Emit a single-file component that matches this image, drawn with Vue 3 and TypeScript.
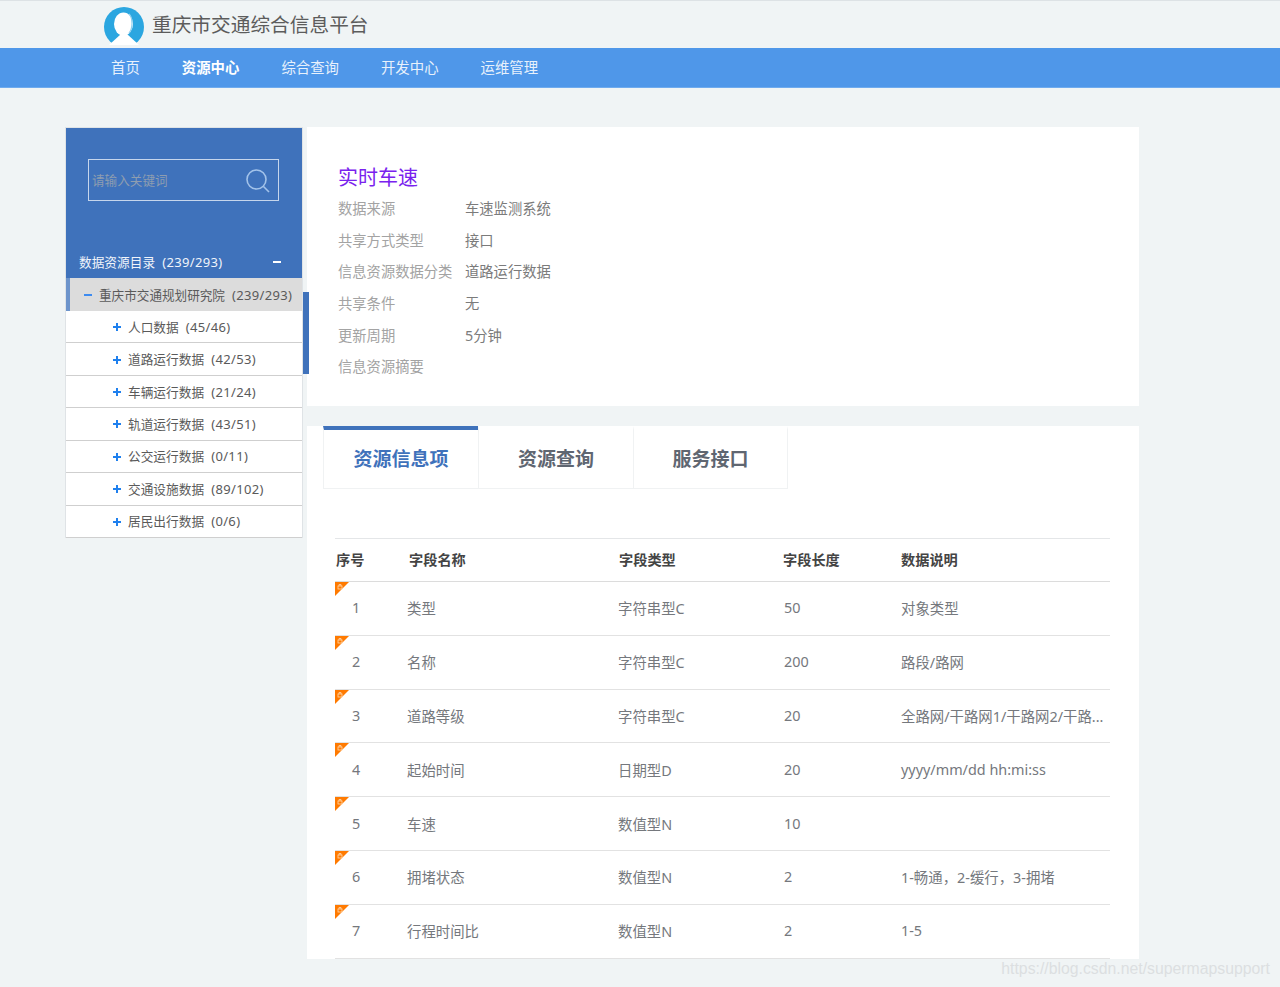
<script setup lang="ts">
const navItems = ['首页', '资源中心', '综合查询', '开发中心', '运维管理']
const children = [
  ['人口数据', '(45/46)'],
  ['道路运行数据', '(42/53)'],
  ['车辆运行数据', '(21/24)'],
  ['轨道运行数据', '(43/51)'],
  ['公交运行数据', '(0/11)'],
  ['交通设施数据', '(89/102)'],
  ['居民出行数据', '(0/6)'],
]
const meta = [
  ['数据来源', '车速监测系统'],
  ['共享方式类型', '接口'],
  ['信息资源数据分类', '道路运行数据'],
  ['共享条件', '无'],
  ['更新周期', '5分钟'],
  ['信息资源摘要', ''],
]
const tabs = ['资源信息项', '资源查询', '服务接口']
const heads = ['序号', '字段名称', '字段类型', '字段长度', '数据说明']
const rows = [
  ['1', '类型', '字符串型C', '50', '对象类型'],
  ['2', '名称', '字符串型C', '200', '路段/路网'],
  ['3', '道路等级', '字符串型C', '20', '全路网/干路网1/干路网2/干路...'],
  ['4', '起始时间', '日期型D', '20', 'yyyy/mm/dd hh:mi:ss'],
  ['5', '车速', '数值型N', '10', ''],
  ['6', '拥堵状态', '数值型N', '2', '1-畅通，2-缓行，3-拥堵'],
  ['7', '行程时间比', '数值型N', '2', '1-5'],
]
</script>

<template>
  <div class="page">
    <header class="top">
      <svg class="logo" viewBox="0 0 40 38" width="40" height="38">
        <defs>
          <clipPath id="logo-clip"><rect x="0" y="0" width="40" height="38" /></clipPath>
        </defs>
        <g clip-path="url(#logo-clip)">
          <circle cx="20" cy="20" r="20" fill="#2ba6e0" />
          <path d="M5 38 L17 27 L23 27 L35 38 Z" fill="#fff" />
          <ellipse cx="19.5" cy="17" rx="9.5" ry="11.5" fill="#fff" />
          <path d="M25 7 C29 11 29 21 25 26" fill="none" stroke="#8fcfee" stroke-width="1.2" />
        </g>
      </svg>
      <span class="brand">重庆市交通综合信息平台</span>
    </header>
    <nav class="nav">
      <a v-for="(n, i) in navItems" :key="n" class="nav-item" :class="{ on: i === 1 }">{{ n }}</a>
    </nav>

    <div class="body">
      <aside class="side">
        <div class="side-head">
          <div class="search">
            <span class="ph">请输入关键词</span>
            <svg viewBox="0 0 26 26" width="26" height="26" class="mag">
              <circle cx="11.5" cy="11.5" r="9.5" fill="none" stroke="#a3c3ea" stroke-width="1.6" />
              <path d="M18.5 18.5 L24 24" stroke="#a3c3ea" stroke-width="1.6" fill="none" />
            </svg>
          </div>
          <div class="cat">
            <span>数据资源目录<span class="num">(239/293)</span></span>
            <i class="cat-minus"></i>
          </div>
        </div>
        <div class="org">
          <i class="org-minus"></i>
          <span>重庆市交通规划研究院<span class="num">(239/293)</span></span>
        </div>
        <div v-for="c in children" :key="c[0]" class="child">
          <i class="plus"></i>
          <span class="child-text">{{ c[0] }}<span class="num">{{ c[1] }}</span></span>
        </div>
      </aside>
      <div class="strip-wrap"><i class="strip"></i></div>

      <main class="main">
        <section class="info">
          <h1 class="title">实时车速</h1>
          <div v-for="m in meta" :key="m[0]" class="meta">
            <span class="k">{{ m[0] }}</span>
            <span class="v">{{ m[1] }}</span>
          </div>
        </section>
        <section class="panel">
          <div class="tabs">
            <div v-for="(t, i) in tabs" :key="t" class="tab" :class="{ on: i === 0 }">{{ t }}</div>
          </div>
          <div class="table">
            <div class="row head">
              <span v-for="h in heads" :key="h" class="cell">{{ h }}</span>
            </div>
            <div v-for="r in rows" :key="r[0]" class="row item">
              <svg class="flag" viewBox="0 0 14 14" width="14" height="14">
                <path d="M0 0 H14 L0 14 Z" fill="#ff7a00" />
                <rect x="3" y="4" width="4" height="3" fill="none" stroke="#ffd9b0" stroke-width="0.8" />
                <path d="M4 4 V2.5 H6 V4" fill="none" stroke="#ffd9b0" stroke-width="0.8" />
              </svg>
              <span v-for="(c, i) in r" :key="i" class="cell">{{ c }}</span>
            </div>
          </div>
        </section>
      </main>
    </div>
    <div class="mark">https://blog.csdn.net/supermapsupport</div>
  </div>
</template>

<style>
html, body { margin: 0; background: #f0f4f5; }
</style>

<style scoped>
.page {
  position: relative;
  height: 987px;
  overflow: hidden;
  background: #f0f4f5;
  font-family: "Noto Sans", "Noto Sans CJK SC", sans-serif;
  color: #555;
}
.top {
  height: 47px;
  border-top: 1px solid #dde2e5;
  display: flex;
  align-items: flex-end;
  padding-left: 104px;
  box-sizing: content-box;
}
.logo { display: block; margin-bottom: 3px; }
.brand {
  margin-left: 8px;
  font-size: 19.7px;
  line-height: 47px;
  color: #5c5c5c;
  align-self: center;
}
.nav {
  height: 39px;
  border-bottom: 1px solid #6fabee;
  background: #4f97e9;
  display: flex;
  padding-left: 111px;
  gap: 42px;
  align-items: center;
}
.nav-item { font-size: 14.4px; color: #e8f1fc; line-height: 39px; }
.nav-item.on { color: #fff; font-weight: 700; }

.body {
  display: flex;
  align-items: flex-start;
  padding: 39px 0 0 65px;
}
.side {
  width: 236px;
  border: 1px solid #dfe3e6;
  border-bottom: none;
  background: #fff;
  flex: none;
}
.side-head {
  background: #3f72bb;
  height: 150px;
  box-sizing: border-box;
  padding: 31px 0 0 22px;
  display: flex;
  flex-direction: column;
}
.search {
  width: 191px;
  height: 42px;
  box-sizing: border-box;
  border: 1px solid #c6d6ec;
  display: flex;
  align-items: center;
  justify-content: space-between;
  padding: 0 7px 0 3px;
}
.ph { font-size: 12.6px; color: #8e9db0; margin-bottom: 1px; }
.mag { display: block; margin-top: 2px; }
.cat {
  margin: 51px 0 0 -9px;
  display: flex;
  justify-content: space-between;
  align-items: center;
  padding-right: 21px;
  font-size: 12.7px;
  line-height: 20px;
  color: #f0f4fa;
  white-space: nowrap;
}
.num { margin-left: 7px; font-size: 13px; letter-spacing: 0.35px; }
.cat-minus { width: 8px; height: 2px; background: #fff; margin-top: -1px; }
.org {
  height: 33px;
  background: #dcdcdc;
  border-left: 4px solid #6d94cb;
  box-sizing: border-box;
  display: flex;
  align-items: center;
  padding-left: 14px;
  font-size: 12.6px;
  color: #5a5a5a;
  white-space: nowrap;
}
.org-minus { width: 8px; height: 2px; background: #3d8bf0; margin-right: 7px; margin-top: 1px; }
.child {
  height: 32.43px;
  box-sizing: border-box;
  border-bottom: 1px solid #cfcfcf;
  display: flex;
  align-items: center;
  padding-left: 47px;
  font-size: 12.7px;
  color: #5a5a5a;
  white-space: nowrap;
  background: #fff;
}
.child-text { margin-bottom: 1px; }
.plus {
  width: 8px;
  height: 8px;
  margin-right: 7px;
  margin-top: 1px;
  background:
    linear-gradient(#1f80ee, #1f80ee) center / 8px 2px no-repeat,
    linear-gradient(#1f80ee, #1f80ee) center / 2px 8px no-repeat;
  flex: none;
}
.strip-wrap { width: 0; flex: none; position: relative; z-index: 1; }
.strip {
  position: absolute;
  left: 0;
  top: 165px;
  width: 6px;
  height: 82px;
  background: #3f72bb;
}
.main { margin-left: 4px; width: 832px; flex: none; position: relative; }
.info {
  background: #fff;
  height: 279px;
  box-sizing: border-box;
  padding: 36px 0 0 31px;
}
.title {
  margin: 0;
  font-size: 20px;
  font-weight: 400;
  color: #7a22ee;
  line-height: 28px;
  padding-top: 1px;
}
.meta { display: flex; height: 31.6px; align-items: center; font-size: 14.3px; }
.meta .k { width: 127px; color: #a3a3a3; white-space: nowrap; }
.meta .v { color: #7a7a7a; opacity: 0.99; }
.panel {
  margin-top: 20px;
  background: #fff;
  height: 533px;
  box-sizing: border-box;
  padding: 0 29px 0 16px;
}
.tabs { display: flex; }
.tab {
  width: 155px;
  height: 63px;
  box-sizing: border-box;
  border: 1px solid #f0f2f3;
  border-right: none;
  border-top: 4px solid transparent;
  display: flex;
  align-items: center;
  justify-content: center;
  padding-bottom: 3px;
  font-size: 19px;
  font-weight: 700;
  color: #5f6671;
}
.tab:last-child { border-right: 1px solid #f0f2f3; }
.tab.on { color: #3f72bb; border-top-color: #3f72bb; }
.table { margin: 49px 0 0 12px; border-top: 1px solid #e4e6e8; }
.row { display: grid; grid-template-columns: 74px 210px 164px 118px 1fr; position: relative; align-items: center; }
.head {
  height: 42px;
  border-bottom: 1px solid #dcdcdc;
  font-size: 14.2px;
  font-weight: 700;
  color: #444;
}
.head .cell { margin-bottom: 2px; }
.head .cell:first-child { margin-left: 1px; }
.item {
  height: 53.8px;
  box-sizing: border-box;
  border-bottom: 1px solid #e2e2e2;
  font-size: 14.4px;
  color: #75787d;
  white-space: nowrap;
}
.item .cell { margin-bottom: 1px; }
.item .cell:nth-of-type(1) { padding-left: 17px; }
.item .cell:nth-of-type(2) { margin-left: -2px; }
.item .cell:nth-of-type(3) { margin-left: -1px; }
.item .cell:nth-of-type(4) { margin-left: 1px; }
.flag { position: absolute; left: 0; top: 0; display: block; }
.mark {
  position: absolute;
  right: 10px;
  bottom: 9px;
  font-family: "Liberation Sans", sans-serif;
  font-size: 15.8px;
  color: #dcdfe1;
}
</style>
